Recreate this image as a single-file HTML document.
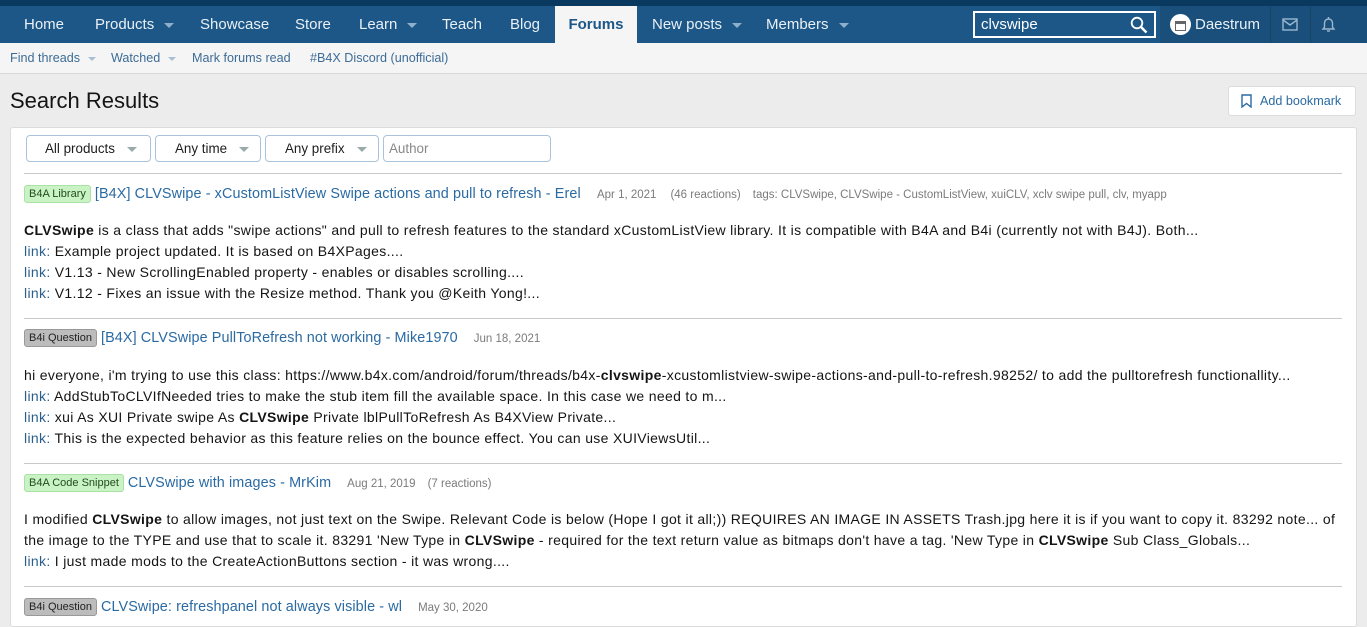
<!DOCTYPE html>
<html><head><meta charset="utf-8"><style>
*{margin:0;padding:0;box-sizing:border-box}
body{width:1367px;height:619px;overflow:hidden;background:#ececec;font-family:"Liberation Sans",sans-serif;font-size:14px;letter-spacing:0.33px;color:#141414;position:relative}
.a{position:absolute;white-space:nowrap}
.top{position:absolute;left:0;top:0;width:1367px;height:6px;background:#0a395f}
.nav{position:absolute;left:0;top:6px;width:1367px;height:37px;background:#1c5787;letter-spacing:0}
.nav .i{position:absolute;top:0;height:37px;line-height:37px;color:#e9f0f6;font-size:15px}
.car{display:inline-block;width:0;height:0;border-left:5px solid transparent;border-right:5px solid transparent;border-top:5px solid #8fb0cb;margin-left:10px;vertical-align:middle}
.sub{position:absolute;left:0;top:43px;width:1367px;height:31px;background:#f5f5f5;border-bottom:1px solid #d8d8d8;letter-spacing:0}
.sub .a{top:8px;color:#3d6c97;font-size:12.6px}
.sub .car{border-top-color:#a7bfd4;border-left-width:4px;border-right-width:4px;border-top-width:4px;margin-left:8px}
.card{position:absolute;left:10px;top:127px;width:1347px;height:500px;background:#fff;border:1px solid #dcdcdc;border-radius:3px}
.f{position:absolute;top:135px;height:27px;border:1px solid #a9c3dc;border-radius:4px;background:#fff;font-size:13.4px;letter-spacing:0;line-height:25px;color:#1d1d1d}
.f .car{border-top-color:#9aa;margin-left:12px}
.hr{position:absolute;left:24px;width:1318px;height:1px;background:#c8c8c8}
.lab{display:inline-block;font-size:11px;letter-spacing:0;padding:0 4px;height:18px;line-height:17px;border-radius:3px;vertical-align:1px;margin-right:4px}
.g{background:#c9f2c5;border:1px solid #a9e2a4;color:#1f4d1b}
.q{background:#bcbcbc;border:1px solid #999;color:#222}
.t{color:#2a6aa3;font-size:14.4px;letter-spacing:0.1px}
.m{color:#7b7b7b;font-size:11.5px;letter-spacing:0}
.ln{color:#2a5f8c}
</style></head><body>
<div class="top"></div>
<div class="nav">
<span class="i" style="left:24px">Home</span>
<span class="i" style="left:95px">Products<span class="car"></span></span>
<span class="i" style="left:200px">Showcase</span>
<span class="i" style="left:295px">Store</span>
<span class="i" style="left:359px">Learn<span class="car"></span></span>
<span class="i" style="left:442px">Teach</span>
<span class="i" style="left:510px">Blog</span>
<div class="a" style="left:555px;top:0;width:82px;height:37px;background:#f5f5f5;color:#1c5787;font-weight:bold;font-size:15px;line-height:37px;text-align:center">Forums</div>
<span class="i" style="left:652px">New posts<span class="car"></span></span>
<span class="i" style="left:766px">Members<span class="car"></span></span>
<div class="a" style="left:973px;top:5px;width:183px;height:27px;border:2px solid #fff;background:#1c5787;color:#fff;font-size:15px;line-height:23px;padding-left:6px">clvswipe
<svg style="position:absolute;right:6px;top:3px" width="18" height="18" viewBox="0 0 18 18"><circle cx="7" cy="7" r="5.3" fill="none" stroke="#fff" stroke-width="1.8"/><path d="M11 11l5.5 5.5" stroke="#fff" stroke-width="2.4"/></svg></div>
<div class="a" style="left:1160px;top:0;width:207px;height:37px;background:#1a4f7b"></div>
<div class="a" style="left:1270px;top:0;width:1px;height:37px;background:#164568"></div>
<div class="a" style="left:1310px;top:0;width:1px;height:37px;background:#164568"></div>
<div class="a" style="left:1170px;top:8px;width:21px;height:21px;border-radius:50%;background:#fff"><div style="position:absolute;left:5px;top:7px;width:11px;height:10px;border:1.5px solid #666;border-top-width:3px"></div></div>
<span class="i" style="left:1195px">Daestrum</span>
<svg class="a" style="left:1282px;top:12px" width="16" height="13" viewBox="0 0 16 13"><rect x="1" y="1" width="14" height="11" fill="none" stroke="#9ab7d0" stroke-width="1.4"/><path d="M1 2l7 5 7-5" fill="none" stroke="#9ab7d0" stroke-width="1.4"/></svg>
<svg class="a" style="left:1321px;top:10px" width="15" height="17" viewBox="0 0 15 17"><path d="M2 13h11l-1.5-2V7a4 4 0 0 0-8 0v4z" fill="none" stroke="#9ab7d0" stroke-width="1.4"/><path d="M6 15h3" stroke="#9ab7d0" stroke-width="1.4"/><path d="M7.5 1v2" stroke="#9ab7d0" stroke-width="1.4"/></svg>
</div>
<div class="sub">
<span class="a" style="left:10px">Find threads<span class="car"></span></span>
<span class="a" style="left:111px">Watched<span class="car"></span></span>
<span class="a" style="left:192px">Mark forums read</span>
<span class="a" style="left:310px">#B4X Discord (unofficial)</span>
</div>
<div class="a" style="left:10px;top:88px;font-size:22px;letter-spacing:0;color:#141414">Search Results</div>
<div class="a" style="left:1228px;top:86px;width:128px;height:30px;background:#fff;border:1px solid #dcdcdc;border-radius:3px;color:#2a6aa3;font-size:12.6px;letter-spacing:0;line-height:28px;padding-left:31px">Add bookmark
<svg style="position:absolute;left:12px;top:7px" width="11" height="14" viewBox="0 0 11 14"><path d="M1 1h9v12L5.5 9.5 1 13z" fill="none" stroke="#2a6aa3" stroke-width="1.4"/></svg></div>
<div class="card"></div>
<div class="f" style="left:26px;width:125px;padding-left:18px">All products<span class="car"></span></div>
<div class="f" style="left:155px;width:106px;padding-left:19px">Any time<span class="car"></span></div>
<div class="f" style="left:265px;width:114px;padding-left:19px">Any prefix<span class="car"></span></div>
<div class="f" style="left:383px;width:168px;padding-left:5px;color:#888">Author</div>
<div class="hr" style="top:173px"></div>

<div class="a" style="left:24px;top:185px"><span class="lab g">B4A Library</span><span class="t">[B4X] CLVSwipe - xCustomListView Swipe actions and pull to refresh - Erel</span> <span class="m" style="margin-left:12px">Apr 1, 2021</span><span class="m" style="margin-left:14px">(46 reactions)</span><span class="m" style="margin-left:12px">tags: CLVSwipe, CLVSwipe - CustomListView, xuiCLV, xclv swipe pull, clv, myapp</span></div>
<div class="a" style="left:24px;top:222px"><b>CLVSwipe</b> is a class that adds "swipe actions" and pull to refresh features to the standard xCustomListView library. It is compatible with B4A and B4i (currently not with B4J). Both...</div>
<div class="a" style="left:24px;top:243px"><span class="ln">link:</span> Example project updated. It is based on B4XPages....</div>
<div class="a" style="left:24px;top:264px"><span class="ln">link:</span> V1.13 - New ScrollingEnabled property - enables or disables scrolling....</div>
<div class="a" style="left:24px;top:285px"><span class="ln">link:</span> V1.12 - Fixes an issue with the Resize method. Thank you @Keith Yong!...</div>
<div class="hr" style="top:318px"></div>

<div class="a" style="left:24px;top:329px"><span class="lab q">B4i Question</span><span class="t">[B4X] CLVSwipe PullToRefresh not working - Mike1970</span><span class="m" style="margin-left:16px">Jun 18, 2021</span></div>
<div class="a" style="left:24px;top:367px">hi everyone, i'm trying to use this class: https://www.b4x.com/android/forum/threads/b4x-<b>clvswipe</b>-xcustomlistview-swipe-actions-and-pull-to-refresh.98252/ to add the pulltorefresh functionallity...</div>
<div class="a" style="left:24px;top:388px"><span class="ln">link:</span> AddStubToCLVIfNeeded tries to make the stub item fill the available space. In this case we need to m...</div>
<div class="a" style="left:24px;top:409px"><span class="ln">link:</span> xui As XUI Private swipe As <b>CLVSwipe</b> Private lblPullToRefresh As B4XView Private...</div>
<div class="a" style="left:24px;top:430px"><span class="ln">link:</span> This is the expected behavior as this feature relies on the bounce effect. You can use XUIViewsUtil...</div>
<div class="hr" style="top:463px"></div>

<div class="a" style="left:24px;top:474px"><span class="lab g">B4A Code Snippet</span><span class="t">CLVSwipe with images - MrKim</span><span class="m" style="margin-left:16px">Aug 21, 2019</span><span class="m" style="margin-left:12px">(7 reactions)</span></div>
<div class="a" style="left:24px;top:511px">I modified <b>CLVSwipe</b> to allow images, not just text on the Swipe. Relevant Code is below (Hope I got it all;)) REQUIRES AN IMAGE IN ASSETS Trash.jpg here it is if you want to copy it. 83292 note... of</div>
<div class="a" style="left:24px;top:532px">the image to the TYPE and use that to scale it. 83291 'New Type in <b>CLVSwipe</b> - required for the text return value as bitmaps don't have a tag. 'New Type in <b>CLVSwipe</b> Sub Class_Globals...</div>
<div class="a" style="left:24px;top:553px"><span class="ln">link:</span> I just made mods to the CreateActionButtons section - it was wrong....</div>
<div class="hr" style="top:586px"></div>

<div class="a" style="left:24px;top:598px"><span class="lab q">B4i Question</span><span class="t">CLVSwipe: refreshpanel not always visible - wl</span><span class="m" style="margin-left:16px">May 30, 2020</span></div>
</body></html>
